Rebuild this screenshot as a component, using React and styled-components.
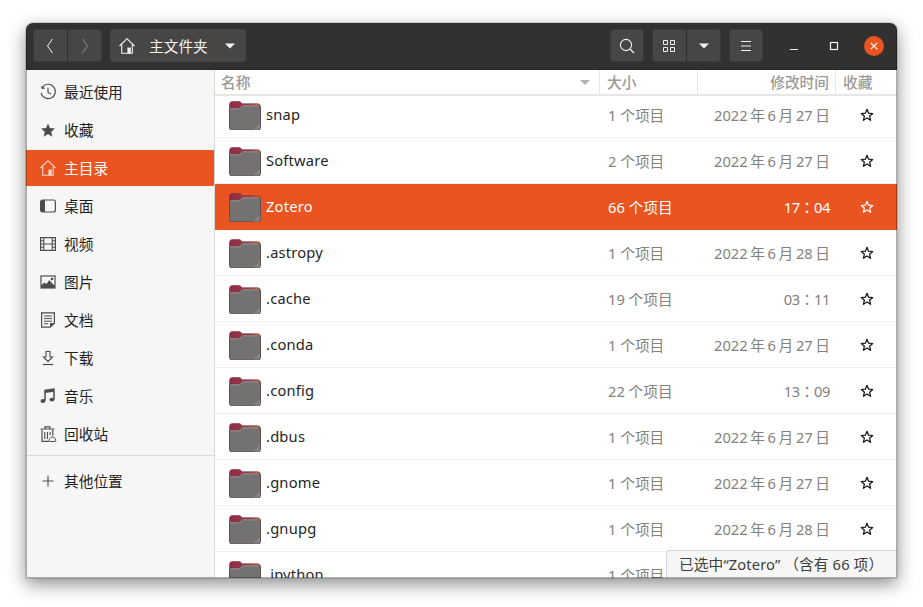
import React from 'react';
import styled, { createGlobalStyle } from 'styled-components';

const GlobalStyle = createGlobalStyle`
  html, body {
    margin: 0;
    padding: 0;
    background: #fff;
  }
  body {
    width: 923px;
    height: 607px;
    overflow: hidden;
    font-family: "Noto Sans", "Noto Sans CJK SC", sans-serif;
  }
`;

const Page = styled.div`
  padding: 23px 26px 29px;
  height: 607px;
  box-sizing: border-box;
`;

const Window = styled.div`
  position: relative;
  height: 555px;
  display: flex;
  flex-direction: column;
  overflow: hidden;
  border-radius: 7px 7px 0 0;
  background: #fff;
  box-shadow: 0 0 0 1px rgba(0, 0, 0, 0.12), 0 6px 18px rgba(0, 0, 0, 0.46);
`;

const WindowEdge = styled.div`
  position: absolute;
  inset: 0;
  pointer-events: none;
  border: 1px solid rgba(0, 0, 0, 0.3);
  border-top: none;
  z-index: 5;
`;

const HeaderBar = styled.header`
  flex: 0 0 47px;
  display: flex;
  align-items: center;
  padding: 0 3px 1px 7px;
  background: #33312f;
  border-bottom: 1px solid #2a2928;
  box-sizing: border-box;
`;

const ButtonGroup = styled.div`
  flex: none;
  display: flex;
  height: 33px;
  margin-right: ${(p) => p.$gap ?? 8}px;
  border-radius: 4px;
  overflow: hidden;
  background: #484644;
  box-shadow: inset 0 0 0 1px #3c3a38;
`;

const HeadButton = styled.div`
  width: 34px;
  display: flex;
  align-items: center;
  justify-content: center;
  color: ${(p) => (p.$dim ? '#8f8d8b' : '#f2f1f0')};
  & + & {
    border-left: 1px solid #2f2e2c;
  }
`;

const PathButton = styled.div`
  flex: none;
  width: 136px;
  height: 33px;
  margin-right: 364px;
  padding: 0 11px 0 8px;
  display: flex;
  align-items: center;
  box-sizing: border-box;
  border-radius: 4px;
  background: #484644;
  color: #f5f4f3;
  font-size: 14.7px;
`;

const PathLabel = styled.span`
  margin-left: 13px;
  flex: 1;
`;

const WindowControls = styled.div`
  flex: none;
  display: flex;
  align-items: center;
  margin-left: 11px;
`;

const WindowControl = styled.div`
  width: 40px;
  height: 24px;
  display: flex;
  align-items: center;
  justify-content: center;
`;

const CloseCircle = styled.div`
  width: 20px;
  height: 20px;
  border-radius: 50%;
  background: #e95420;
  display: flex;
  align-items: center;
  justify-content: center;
`;

const Body = styled.div`
  flex: 1;
  min-height: 0;
  display: flex;
`;

const Sidebar = styled.nav`
  flex: 0 0 189px;
  padding-top: 4px;
  box-sizing: border-box;
  background: #f6f6f6;
  border-right: 1px solid #d8d8d6;
`;

const SideRow = styled.div`
  height: 36px;
  margin-bottom: 2px;
  display: flex;
  align-items: center;
  padding-left: 13px;
  font-size: 14.7px;
  color: ${(p) => (p.$active ? '#ffffff' : '#1f1f1f')};
  background: ${(p) => (p.$active ? '#e95420' : 'transparent')};
`;

const SideLabel = styled.span`
  padding-bottom: 2px;
`;

const SideIcon = styled.span`
  width: 18px;
  height: 18px;
  margin-right: 7px;
  display: flex;
  align-items: center;
  justify-content: center;
  color: ${(p) => (p.$active ? '#fbd9cb' : '#4d4d4d')};
`;

const SideDivider = styled.div`
  height: 1px;
  margin: 3px 0 7px;
  background: #dcdcda;
`;

const Main = styled.main`
  flex: 1;
  min-width: 0;
  display: flex;
  flex-direction: column;
  overflow: hidden;
  background: #fff;
`;

const Columns = `
  display: grid;
  grid-template-columns: 385px 98px 138px 1fr;
`;

const ColumnHeader = styled.div`
  ${Columns}
  flex: 0 0 26px;
  box-sizing: border-box;
  border-bottom: 2px solid #e6e6e4;
  position: relative;
  z-index: 2;
  background: #fff;
`;

const ColumnTitle = styled.div`
  display: flex;
  align-items: center;
  justify-content: ${(p) => (p.$align === 'right' ? 'flex-end' : 'flex-start')};
  padding: 0 6px 1px ${(p) => p.$left ?? 7}px;
  font-size: 14.7px;
  font-weight: 500;
  color: #9a9a98;
  border-right: ${(p) => (p.$last ? 'none' : '1px solid #e6e6e4')};
  box-sizing: border-box;
`;

const SortCaret = styled.span`
  margin-left: auto;
  margin-right: 3px;
  margin-top: 1px;
  width: 0;
  height: 0;
  border-left: 5px solid transparent;
  border-right: 5px solid transparent;
  border-top: 5px solid #b3b3b1;
`;

const List = styled.div`
  margin-top: -4px;
`;

const Row = styled.div`
  ${Columns}
  height: 46px;
  box-sizing: border-box;
  border-bottom: 1px solid ${(p) => (p.$selected ? '#e95420' : '#efefee')};
  background: ${(p) => (p.$selected ? '#e95420' : '#fff')};
  font-size: 14.7px;
`;

const NameCell = styled.div`
  display: flex;
  align-items: center;
  padding-left: 14px;
  color: ${(p) => (p.$selected ? '#fff' : '#1f1f1f')};
`;

const FolderName = styled.span`
  margin-left: 5px;
  padding-bottom: 2px;
  letter-spacing: 0.2px;
`;

const SizeCell = styled.div`
  display: flex;
  align-items: center;
  padding-left: 8px;
  color: ${(p) => (p.$selected ? '#fff' : '#85817d')};
`;

const DateCell = styled.div`
  display: flex;
  align-items: center;
  justify-content: flex-end;
  padding-right: 6px;
  word-spacing: -1.2px;
  letter-spacing: ${(p) => (p.$time ? '-0.4px' : '0')};
  font-family: ${(p) => (p.$time ? '"Noto Sans", "Noto Sans CJK TC", sans-serif' : 'inherit')};
  color: ${(p) => (p.$selected ? '#fff' : '#85817d')};
`;

const StarCell = styled.div`
  display: flex;
  align-items: center;
  justify-content: center;
  color: ${(p) => (p.$selected ? '#fff' : '#111')};
`;

const StatusOverlay = styled.div`
  position: absolute;
  right: 0;
  bottom: 0;
  width: 231px;
  height: 28px;
  padding: 0 0 2px 12px;
  display: flex;
  align-items: center;
  box-sizing: border-box;
  background: #f6f6f6;
  border-top: 1px solid #d5d5d3;
  border-left: 1px solid #d5d5d3;
  border-top-left-radius: 4px;
  font-size: 14.7px;
  letter-spacing: 0.12px;
  color: #3d3d3d;
  z-index: 3;
`;

const Svg = ({ size = 16, w, h, children, fill = 'none' }) => (
  <svg width={w ?? size} height={h ?? size} viewBox={`0 0 ${w ?? size} ${h ?? size}`} fill={fill} style={{ display: 'block' }}>
    {children}
  </svg>
);

const HomeIcon = ({ color = 'currentColor' }) => (
  <Svg size={18}>
    <path d="M1.500 9 9 1.700 16.500 9M3.700 7.500v8.800h10.600V7.500" stroke={color} strokeWidth="1.100" fill="none" />
    <rect x="9.400" y="10.600" width="3.400" height="5.700" fill={color} />
  </Svg>
);

const ClockIcon = () => (
  <Svg size={18}>
    <path d="M3.600 3.900A7.200 7.200 0 1 1 2.100 9.800" stroke="currentColor" strokeWidth="1.200" />
    <path d="M1.800 2.800 3 6.200l3.300-.9" fill="currentColor" />
    <path d="M9 4.800v4.600l3 1.700" stroke="currentColor" strokeWidth="1.200" />
  </Svg>
);

const StarFilled = () => (
  <Svg size={18}>
    <path d="m9 2.400 2 4.600 5 .5-3.800 3.300 1.100 4.900L9 13.100l-4.300 2.600 1.100-4.900L2 7.500l5-.5z" fill="currentColor" />
  </Svg>
);

const DesktopIcon = () => (
  <Svg size={18}>
    <rect x="1.600" y="3" width="14.800" height="12" rx="2" stroke="currentColor" strokeWidth="1.200" />
    <path d="M3.500 3H6v12H3.500A2 2 0 0 1 1.500 13V5a2 2 0 0 1 2-2z" fill="currentColor" />
  </Svg>
);

const FilmIcon = () => (
  <Svg size={18}>
    <rect x="1.600" y="2.600" width="14.800" height="12.800" stroke="currentColor" strokeWidth="1.200" />
    <path d="M4.800 2.600v12.800M13.200 2.600v12.800M4.800 9h8.400M1.600 5.700h3.200M1.600 9h3.200M1.600 12.300h3.200M13.200 5.700h3.200M13.200 9h3.200M13.200 12.300h3.200" stroke="currentColor" strokeWidth="1.100" />
  </Svg>
);

const PictureIcon = () => (
  <Svg size={18}>
    <rect x="2" y="3" width="14" height="12" fill="#f6f6f6" stroke="currentColor" strokeWidth="1.200" />
    <path d="M2 15v-2.500l3.500-3 2 1.500 2.800-4 4 4.500 1.700 1V15z" fill="currentColor" />
    <circle cx="13" cy="6" r="1.300" fill="currentColor" />
  </Svg>
);

const DocIcon = () => (
  <Svg size={18}>
    <path d="M2.600 1.800h12.800v10.400l-4 4H2.600z" stroke="currentColor" strokeWidth="1.200" />
    <path d="M5 5h8M5 7.600h8M5 10.200h8M5 12.800h4" stroke="currentColor" strokeWidth="1" />
    <path d="M11 16v-4h4.500z" fill="currentColor" />
  </Svg>
);

const DownloadIcon = () => (
  <Svg size={18}>
    <path d="M7 2.500h4v5.500h2.500L9 12.500 4.500 8H7z" stroke="currentColor" strokeWidth="1.100" />
    <path d="M3.800 15.500h10.400" stroke="currentColor" strokeWidth="1.200" />
  </Svg>
);

const MusicIcon = () => (
  <Svg size={18}>
    <path d="M6 13.800V3.500l9-1.300v10" stroke="currentColor" strokeWidth="1.500" />
    <path d="M6 3.500l9-1.300v2.600l-9 1.300z" fill="currentColor" />
    <ellipse cx="3.900" cy="14" rx="2.400" ry="1.900" fill="currentColor" />
    <ellipse cx="12.900" cy="12.600" rx="2.400" ry="1.900" fill="currentColor" />
  </Svg>
);

const TrashIcon = () => (
  <Svg size={18}>
    <path d="M1.500 4h14M6 4V1.800h5V4" stroke="currentColor" strokeWidth="1.200" />
    <path d="M3 4.500V16.400h7M13.800 4.500v6" stroke="currentColor" strokeWidth="1.200" />
    <path d="M5.800 7v7M8.500 7v7M11.100 7v3" stroke="currentColor" strokeWidth="1.100" />
    <path d="M11 16.500a2 2 0 0 1 .3-3.300 2.500 2.500 0 0 1 4.700.6 1.800 1.800 0 0 1 .3 2.700z" fill="#f6f6f6" stroke="currentColor" strokeWidth="1" />
  </Svg>
);

const PlusIcon = () => (
  <Svg size={18}>
    <path d="M9 3.500v11M3.500 9h11" stroke="currentColor" strokeWidth="1.100" />
  </Svg>
);

const OutlineStar = () => (
  <Svg size={14}>
    <path d="m7 1.300 1.600 3.900 4.100.3-3.100 2.700 1 4.100L7 10.100l-3.600 2.200 1-4.100L1.300 5.500l4.100-.3z" stroke="currentColor" strokeWidth="1.200" strokeLinejoin="round" />
  </Svg>
);

const ChevronLeft = () => (
  <Svg w={8} h={16}>
    <path d="M6.500 1 1.500 8l5 7" stroke="currentColor" strokeWidth="1" />
  </Svg>
);

const ChevronRight = () => (
  <Svg w={8} h={16}>
    <path d="m1.500 1 5 7-5 7" stroke="currentColor" strokeWidth="1" />
  </Svg>
);

const Caret = () => (
  <Svg w={10} h={6}>
    <path d="M0 .5h10L5 5.500z" fill="currentColor" />
  </Svg>
);

const SearchIcon = () => (
  <Svg size={16}>
    <circle cx="7" cy="7" r="5.600" stroke="currentColor" strokeWidth="1.100" />
    <path d="m11 11 4 4" stroke="currentColor" strokeWidth="1.300" />
  </Svg>
);

const GridIcon = () => (
  <Svg size={14}>
    <path d="M1.500 1.500h4v4h-4zM8.500 1.500h4v4h-4zM1.500 8.500h4v4h-4zM8.500 8.500h4v4h-4z" stroke="currentColor" strokeWidth="1" />
  </Svg>
);

const MenuIcon = () => (
  <Svg w={12} h={12}>
    <path d="M1 1.500h10M1 6h10M1 10.500h10" stroke="currentColor" strokeWidth="1" />
  </Svg>
);

const FolderIcon = ({ id }) => (
  <Svg w={32} h={30}>
    <defs>
      <linearGradient id={`tab-${id}`} x1="0" x2="1" y1="0" y2="0">
        <stop offset="0" stopColor="#8c2a4b" />
        <stop offset="0.6" stopColor="#a03a40" />
        <stop offset="1" stopColor="#e0662a" />
      </linearGradient>
    </defs>
    <path d="M.5 4.500a3 3 0 0 1 3-3h6.500c1.500 0 2 1.500 3.500 2.200h15a3 3 0 0 1 3 3v6H.5z" fill={`url(#tab-${id})`} stroke="#7a3348" strokeWidth=".6" />
    <path d="M.5 9.500c0-.7.500-1 1-1h8c2 0 2.500-2 4.500-3h15.500c1.200 0 2 .8 2 2v20a2.300 2.300 0 0 1-2.300 2.300H2.800a2.300 2.300 0 0 1-2.300-2.300z" fill="#737271" stroke="#5d4f52" strokeWidth="1" />
    <path d="M1.300 8.800h8.200c2 0 2.500-2 4.500-3h15.500" stroke="#a9a3a3" strokeWidth=".8" />
    <path d="m31 23-6.500 6.500h4.200a2.300 2.300 0 0 0 2.300-2.300z" fill="#868584" />
  </Svg>
);

const places = [
  { label: '最近使用', Icon: ClockIcon },
  { label: '收藏', Icon: StarFilled },
  { label: '主目录', Icon: HomeIcon, active: true },
  { label: '桌面', Icon: DesktopIcon },
  { label: '视频', Icon: FilmIcon },
  { label: '图片', Icon: PictureIcon },
  { label: '文档', Icon: DocIcon },
  { label: '下载', Icon: DownloadIcon },
  { label: '音乐', Icon: MusicIcon },
  { label: '回收站', Icon: TrashIcon },
];

const files = [
  { name: 'snap', size: '1 个项目', date: '2022 年 6 月 27 日' },
  { name: 'Software', size: '2 个项目', date: '2022 年 6 月 27 日' },
  { name: 'Zotero', size: '66 个项目', date: '17：04', selected: true },
  { name: '.astropy', size: '1 个项目', date: '2022 年 6 月 28 日' },
  { name: '.cache', size: '19 个项目', date: '03：11' },
  { name: '.conda', size: '1 个项目', date: '2022 年 6 月 27 日' },
  { name: '.config', size: '22 个项目', date: '13：09' },
  { name: '.dbus', size: '1 个项目', date: '2022 年 6 月 27 日' },
  { name: '.gnome', size: '1 个项目', date: '2022 年 6 月 27 日' },
  { name: '.gnupg', size: '1 个项目', date: '2022 年 6 月 28 日' },
  { name: '.ipython', size: '1 个项目', date: '2022 年 6 月 27 日' },
];

export default function App() {
  return (
    <Page>
      <GlobalStyle />
      <Window>
        <HeaderBar>
          <ButtonGroup>
            <HeadButton><ChevronLeft /></HeadButton>
            <HeadButton $dim><ChevronRight /></HeadButton>
          </ButtonGroup>
          <PathButton>
            <HomeIcon />
            <PathLabel>主文件夹</PathLabel>
            <Caret />
          </PathButton>
          <ButtonGroup>
            <HeadButton><SearchIcon /></HeadButton>
          </ButtonGroup>
          <ButtonGroup>
            <HeadButton><GridIcon /></HeadButton>
            <HeadButton><Caret /></HeadButton>
          </ButtonGroup>
          <ButtonGroup $gap={0}>
            <HeadButton><MenuIcon /></HeadButton>
          </ButtonGroup>
          <WindowControls>
            <WindowControl>
              <Svg w={10} h={10}><path d="M1 8.500h8" stroke="#f2f1f0" strokeWidth="1.200" /></Svg>
            </WindowControl>
            <WindowControl>
              <Svg w={10} h={10}><rect x="1.500" y="1.500" width="7" height="7" stroke="#f2f1f0" strokeWidth="1.200" /></Svg>
            </WindowControl>
            <WindowControl>
              <CloseCircle>
                <Svg w={8} h={8}><path d="m.8.800 6.400 6.400M7.200.800.800 7.200" stroke="#fff" strokeWidth="1.200" /></Svg>
              </CloseCircle>
            </WindowControl>
          </WindowControls>
        </HeaderBar>
        <Body>
          <Sidebar>
            {places.map(({ label, Icon, active }) => (
              <SideRow key={label} $active={active}>
                <SideIcon $active={active}><Icon /></SideIcon>
                <SideLabel>{label}</SideLabel>
              </SideRow>
            ))}
            <SideDivider />
            <SideRow>
              <SideIcon><PlusIcon /></SideIcon>
              <SideLabel>其他位置</SideLabel>
            </SideRow>
          </Sidebar>
          <Main>
            <ColumnHeader>
              <ColumnTitle $left={6}>名称<SortCaret /></ColumnTitle>
              <ColumnTitle>大小</ColumnTitle>
              <ColumnTitle $align="right">修改时间</ColumnTitle>
              <ColumnTitle $last>收藏</ColumnTitle>
            </ColumnHeader>
            <List>
              {files.map((file) => (
                <Row key={file.name} $selected={file.selected}>
                  <NameCell $selected={file.selected}>
                    <FolderIcon id={file.name.replace('.', '')} />
                    <FolderName>{file.name}</FolderName>
                  </NameCell>
                  <SizeCell $selected={file.selected}>{file.size}</SizeCell>
                  <DateCell $selected={file.selected} $time={file.date.includes('：')}>{file.date}</DateCell>
                  <StarCell $selected={file.selected}><OutlineStar /></StarCell>
                </Row>
              ))}
            </List>
          </Main>
        </Body>
        <StatusOverlay>已选中“Zotero” （含有 66 项）</StatusOverlay>
        <WindowEdge />
      </Window>
    </Page>
  );
}
